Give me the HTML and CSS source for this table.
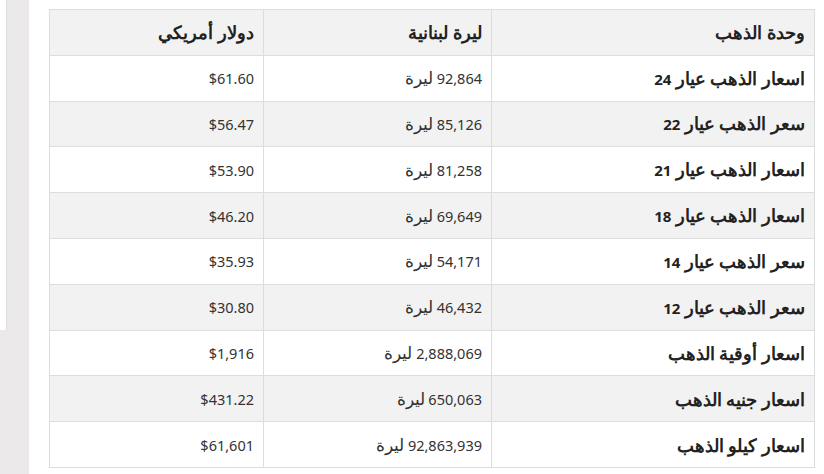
FILE: index.html
```html
<!DOCTYPE html>
<html lang="ar">
<head>
<meta charset="utf-8">
<link rel="stylesheet" href="styles.css">
</head>
<body>
<div class="page">
  <aside class="side"><div class="side-panel"></div></aside>
  <main class="main">
    <table class="gold" dir="rtl">
      <colgroup><col class="c1"><col class="c2"><col class="c3"></colgroup>
      <thead>
        <tr><th>وحدة الذهب</th><th>ليرة لبنانية</th><th>دولار أمريكي</th></tr>
      </thead>
      <tbody>
        <tr><td class="name">اسعار الذهب عيار <span class="num">24</span></td><td>92,864 <span class="ar">ليرة</span></td><td>$61.60</td></tr>
        <tr><td class="name">سعر الذهب عيار <span class="num">22</span></td><td>85,126 <span class="ar">ليرة</span></td><td>$56.47</td></tr>
        <tr><td class="name">اسعار الذهب عيار <span class="num">21</span></td><td>81,258 <span class="ar">ليرة</span></td><td>$53.90</td></tr>
        <tr><td class="name">اسعار الذهب عيار <span class="num">18</span></td><td>69,649 <span class="ar">ليرة</span></td><td>$46.20</td></tr>
        <tr><td class="name">سعر الذهب عيار <span class="num">14</span></td><td>54,171 <span class="ar">ليرة</span></td><td>$35.93</td></tr>
        <tr><td class="name">سعر الذهب عيار <span class="num">12</span></td><td>46,432 <span class="ar">ليرة</span></td><td>$30.80</td></tr>
        <tr><td class="name">اسعار أوقية الذهب</td><td>2,888,069 <span class="ar">ليرة</span></td><td>$1,916</td></tr>
        <tr><td class="name">اسعار جنيه الذهب</td><td>650,063 <span class="ar">ليرة</span></td><td>$431.22</td></tr>
        <tr><td class="name">اسعار كيلو الذهب</td><td>92,863,939 <span class="ar">ليرة</span></td><td>$61,601</td></tr>
      </tbody>
    </table>
  </main>
</div>
</body>
</html>
```
FILE: styles.css
```css
html, body { margin: 0; padding: 0; background: #fff; }
body { font-family: "Noto Sans", sans-serif; }
.page { display: flex; width: 824px; height: 474px; overflow: hidden; }
.side { width: 29px; flex: none; background: #ebe9ea; }
.side-panel { width: 7px; height: 330px; background: #fff; border-right: 1px solid #dcdcdc; box-sizing: border-box; }
.main { flex: 1; padding: 9px 0 0 20px; }
.gold { border-collapse: collapse; width: 765px; table-layout: fixed; font-size: 14.5px; color: #333; }
.gold col.c1 { width: 323px; }
.gold col.c2 { width: 228px; }
.gold col.c3 { width: 214px; }
.gold th, .gold td { border: 1px solid #dddddd; text-align: right; padding: 0 9px; height: 44.8px; line-height: 20px; }
.gold th { font-weight: bold; color: #222; background: #f2f2f2; font-size: 17.5px; }
.gold td.name { font-weight: bold; color: #222; font-size: 17.5px; }
.gold .num { font-size: 15px; }
.gold .ar { font-size: 17px; }
.gold tbody tr:nth-child(even) td { background: #f2f2f2; }
```
